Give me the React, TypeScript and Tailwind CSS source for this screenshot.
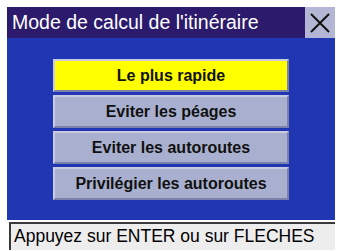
const options = [
  "Le plus rapide",
  "Eviter les péages",
  "Eviter les autoroutes",
  "Privilégier les autoroutes",
];

const CloseIcon = () => (
  <svg width="22" height="22" viewBox="0 0 22 22" fill="none">
    <path d="M2 2 L20 20 M20 2 L2 20" stroke="#111" strokeWidth="2" />
  </svg>
);

export default function App() {
  return (
    <div
      className="w-[342px] h-[251px] bg-white pt-[7px] pl-[7px]"
      style={{ fontFamily: '"Liberation Sans", Arial, sans-serif' }}
    >
      <div className="w-[328px] flex flex-col">
        {/* title bar */}
        <div className="h-[31px] bg-[#2c1b6c] flex items-stretch">
          <div className="flex-1 flex items-center pl-[5px] text-white text-[19.5px] leading-none">
            Mode de calcul de l'itinéraire
          </div>
          <div className="w-[30px] bg-[#b3b6d4] flex items-center justify-center">
            <CloseIcon />
          </div>
        </div>

        {/* options */}
        <div className="h-[182px] bg-[#2136b3] flex flex-col items-center pt-[21px] gap-[3px]">
          {options.map((label, i) => (
            <div
              key={label}
              className={`w-[236px] h-[33px] flex items-center justify-center text-[16px] font-bold text-[#111] border-2 border-t-[#c9cce0] border-l-[#c9cce0] border-b-[#7a82ab] border-r-[#7a82ab] ${
                i === 0 ? "bg-[#ffff00]" : "bg-[#a9b0cf]"
              }`}
            >
              {label}
            </div>
          ))}
        </div>

        {/* status line */}
        <div className="mt-[2px] ml-[2px] h-[28px] bg-[#ededed] border-t-2 border-l-2 border-[#3a3a3a] flex items-center pl-[3px] text-[17.5px] text-black leading-none">
          Appuyez sur ENTER ou sur FLECHES
        </div>
      </div>
    </div>
  );
}
